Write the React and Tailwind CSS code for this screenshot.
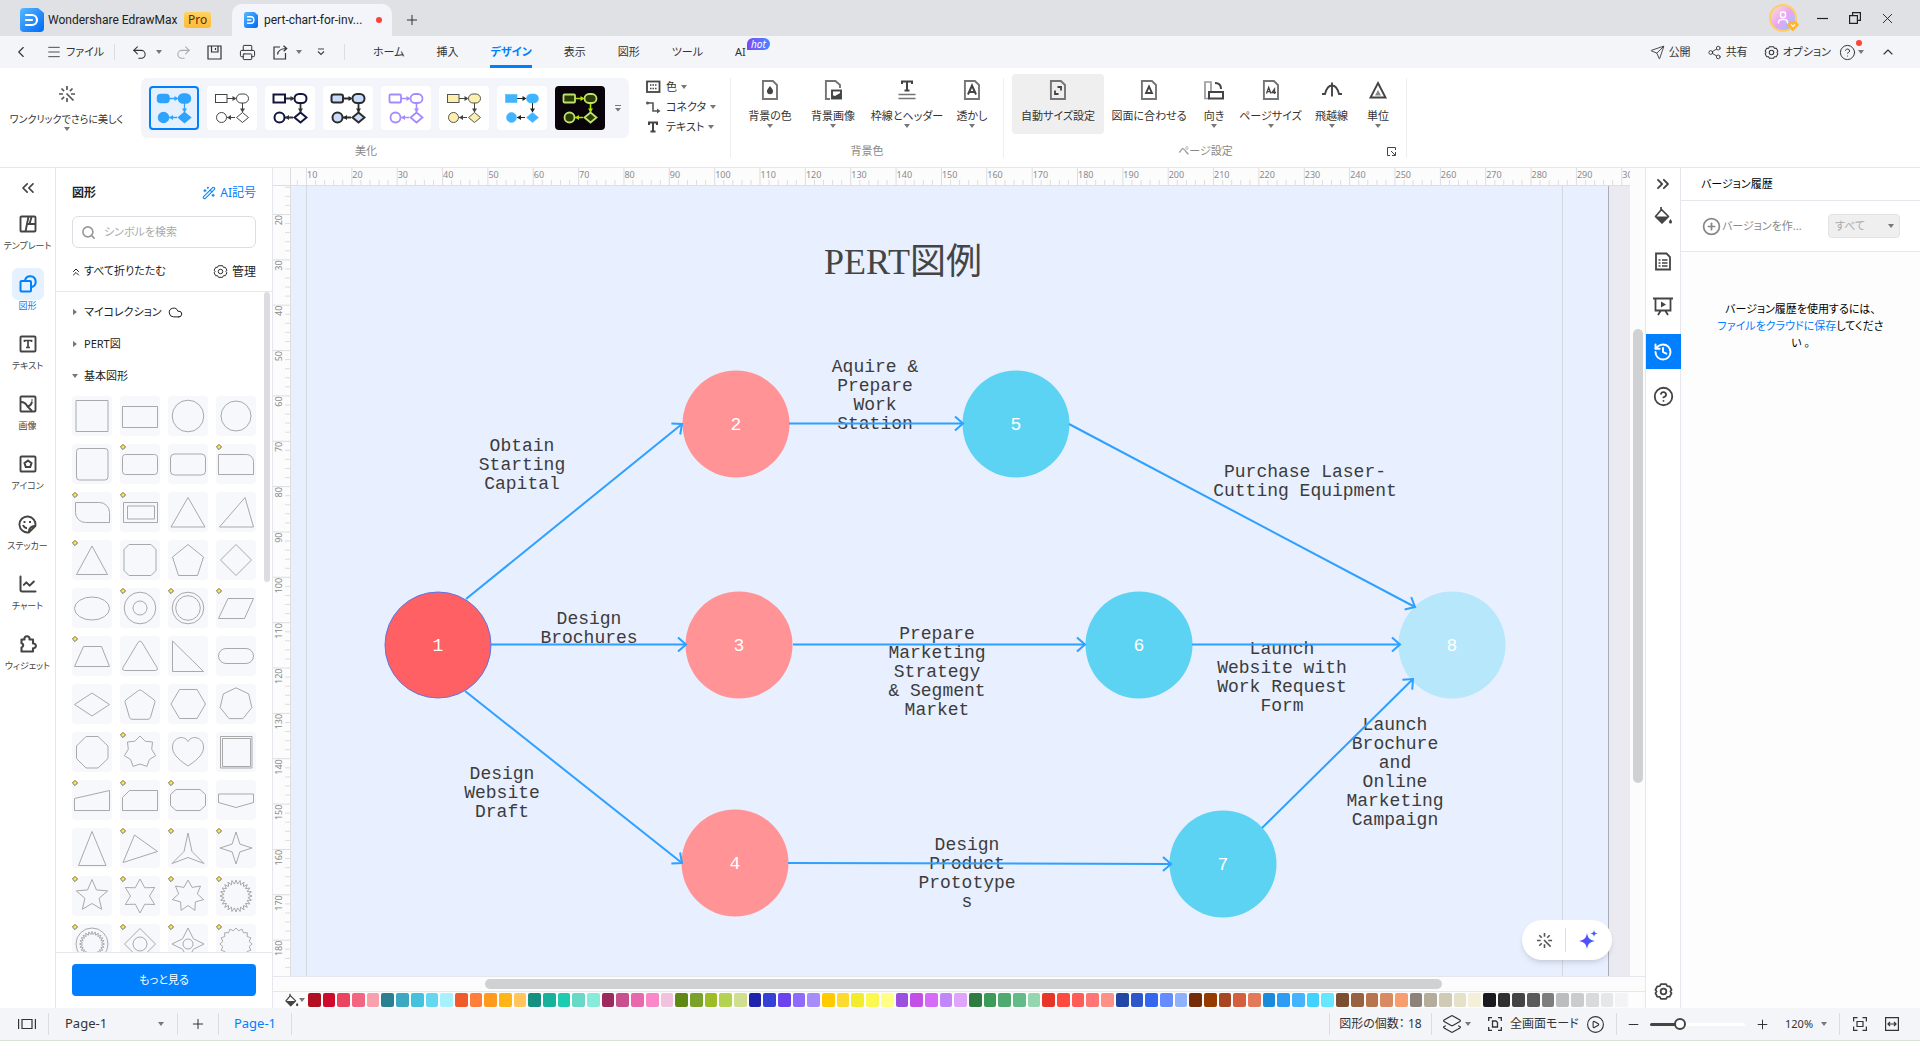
import React, { useState } from 'react';
import clsx from 'clsx';
import {
  ChevronLeft, Menu, Undo2, Redo2, Printer, Plus, Minus, X,
  Send, Share2, CircleHelp, ChevronUp, ChevronsLeft, ChevronsRight, ChevronsUp,
  Search, Cloud, WandSparkles, ChartLine, CirclePlus, History, Layers2, CirclePlay,
} from 'lucide-react';

// ---------------------------------------------------------------- helpers

function Caret({ className }) {
  return (
    <svg width="6" height="4" viewBox="0 0 6 4" className={clsx('shrink-0 fill-[#777]', className)}>
      <path d="M0 0h6L3 4z" />
    </svg>
  );
}

function Sep({ className }) {
  return <div className={clsx('w-px shrink-0 bg-[#dcdde2]', className)} />;
}

function Gear({ size = 16, strokeWidth = 1.2 }) {
  return (
    <svg width={size} height={size} viewBox="0 0 16 16" fill="none" stroke="currentColor" strokeWidth={strokeWidth} strokeLinejoin="round">
      <path d="M5.8 1.8h4.4l.9 1.7 2.1.1 1.6 3-1 1.4 1 1.4-1.6 3-2.1.1-.9 1.7H5.8l-.9-1.7-2.1-.1-1.6-3 1-1.4-1-1.4 1.6-3 2.1-.1z" />
      <circle cx="8" cy="8" r="2.4" />
    </svg>
  );
}

function BucketIcon({ size = 20 }) {
  return (
    <svg width={size} height={size} viewBox="0 0 20 20">
      <path d="M8 1v4M8.5 3.5 15.5 10.500 9 17 2.500 10.500z" fill="none" stroke="#444" strokeWidth="1.700" strokeLinejoin="round" />
      <path d="M2.500 10.500h13L9 17z" fill="#444" />
      <path d="M17.500 13c1 1.500 1.500 2.200 1.500 3a1.500 1.500 0 0 1-3 0c0-.8.5-1.500 1.500-3z" fill="#444" />
    </svg>
  );
}

function MagicIcon({ size = 18 }) {
  return (
    <svg width={size} height={size} viewBox="0 0 18 18" fill="none" stroke="#555" strokeWidth="1.700">
      <path d="M9 1v4M9 13v4M1 9h4M13 9h4M3.500 3.500l2.600 2.600M14.500 3.500l-2.600 2.600M3.500 14.500l2.600-2.600M8.500 8.500l7 7" />
    </svg>
  );
}

function PageIcon({ children }) {
  return (
    <svg width="20" height="20" viewBox="0 0 20 20">
      <path d="M2.900 1h10L17 5v14H2.900z" fill="none" stroke="#757575" strokeWidth="1.900" />
      {children}
    </svg>
  );
}

// ---------------------------------------------------------------- title bar

function AppLogo({ className }) {
  return (
    <svg viewBox="0 0 24 24" preserveAspectRatio="none" className={className}>
      <defs>
        <linearGradient id="logo" x1="0" y1="0" x2="1" y2="1">
          <stop offset="0" stopColor="#56b8ff" />
          <stop offset="1" stopColor="#0068f5" />
        </linearGradient>
      </defs>
      <path d="M4 0h14l6 5v15a4 4 0 0 1-4 4H4a4 4 0 0 1-4-4V4a4 4 0 0 1 4-4z" fill="url(#logo)" />
      <path d="M6 7h6a5 5 0 0 1 0 10H6M6 12h6" fill="none" stroke="#fff" strokeWidth="2.200" strokeLinecap="round" />
    </svg>
  );
}

function TitleBar() {
  return (
    <header className="flex h-9 shrink-0 items-stretch bg-[#e0e1e5] pl-5 text-[#222]">
      <div className="flex w-[212px] items-center pt-[3px]">
        <AppLogo className="h-6 w-6 shrink-0" />
        <span className="ml-1 w-[132px] shrink-0 font-['Roboto',sans-serif] text-xs whitespace-nowrap">Wondershare EdrawMax</span>
        <span className="ml-1 rounded-[3px] bg-gradient-to-b from-[#ffd35f] to-[#ffb936] px-1 text-xs leading-4 text-[#5b2c00]">Pro</span>
      </div>
      <div className="mt-1 flex w-40 items-center rounded-t-[10px] bg-[#f3f5fa] pl-3">
        <AppLogo className="h-4 w-[14px] shrink-0" />
        <span className="ml-[6px] w-[104px] font-['Roboto',sans-serif] text-xs whitespace-nowrap">pert-chart-for-inv...</span>
        <span className="ml-2 h-[6px] w-[6px] rounded-full bg-[#ff4236]" />
      </div>
      <button aria-label="新しいタブ" className="px-3 pt-[3px]"><Plus size={16} strokeWidth={1.4} /></button>
      <div className="ml-auto flex items-center pr-6">
        <div className="relative mr-[18px] h-7 w-7 rounded-full border-2 border-[#ffcf66] bg-gradient-to-br from-[#ffe0c8] via-[#e9a4f5] to-[#7cc4ff]">
          <svg viewBox="0 0 24 24" className="h-6 w-6" fill="none" stroke="#fff" strokeWidth="1.500">
            <rect x="9.500" y="6" width="5" height="5.500" rx="2" />
            <path d="M7.500 17.500v-1.500a3 3 0 0 1 3-2.500h3a3 3 0 0 1 3 2.500v1.500" />
          </svg>
          <svg viewBox="0 0 12 12" className="absolute -right-1 -bottom-0.5 h-3 w-3">
            <path d="M3 1h6l3 4-6 6.500L0 5z" fill="#ffb52e" />
            <path d="M4 4.500l2 2 2-2" fill="none" stroke="#fff" strokeWidth="1.200" />
          </svg>
        </div>
        <button aria-label="最小化" className="mr-5">
          <svg width="14" height="14" viewBox="0 0 14 14" stroke="#222" strokeWidth="1.200"><path d="M2 7.500h11" /></svg>
        </button>
        <button aria-label="元に戻す" className="mr-[18px]">
          <svg width="12" height="12" viewBox="0 0 12 12" fill="none" stroke="#222" strokeWidth="1.200">
            <path d="M.6 3.600h7.800v7.800H.6zM3.600 3.600V.6h7.800v7.800h-3" />
          </svg>
        </button>
        <button aria-label="閉じる"><X size={17} strokeWidth={1.3} /></button>
      </div>
    </header>
  );
}

// ---------------------------------------------------------------- menu bar

const MENUS = ['ホーム', '挿入', 'デザイン', '表示', '図形', 'ツール', 'AI'];

function MenuBar() {
  const [active, setActive] = useState('デザイン');
  return (
    <nav className="flex h-8 shrink-0 items-center bg-[#f3f5f9] pr-6 pl-3 text-[11px] text-[#333]">
      <button aria-label="戻る" className="mr-4"><ChevronLeft size={18} strokeWidth={1.5} /></button>
      <button className="flex w-[60px] items-center gap-1 text-[11px] whitespace-nowrap"><Menu size={16} strokeWidth={1.3} className="shrink-0" />ファイル</button>
      <Sep className="mr-4 ml-2 h-4" />
      <button aria-label="元に戻す" className="flex w-[44px] items-center gap-2"><Undo2 size={17} strokeWidth={1.5} /><Caret /></button>
      <button aria-label="やり直し" className="w-8 text-[#aaa]"><Redo2 size={17} strokeWidth={1.5} /></button>
      <button aria-label="保存" className="w-8">
        <svg width="15" height="15" viewBox="0 0 15 15" fill="none" stroke="#333" strokeWidth="1.200"><path d="M1 1h13v13H1zM4.500 1v6h6.500V1M8.500 3v2" /></svg>
      </button>
      <button aria-label="印刷" className="w-[34px]"><Printer size={17} strokeWidth={1.4} /></button>
      <button aria-label="エクスポート" className="flex w-11 items-center gap-2">
        <svg width="15" height="15" viewBox="0 0 15 15" fill="none" stroke="#333" strokeWidth="1.200"><path d="M7 2H1v12h11.500V8M4.500 9.500C5 6 8 3.500 13.500 3.500M10.500.8l3.200 2.700-3 2.700" /></svg>
        <Caret />
      </button>
      <button aria-label="その他" className="w-[27px]">
        <svg width="8" height="8" viewBox="0 0 8 8" fill="none" stroke="#444" strokeWidth="1.200"><path d="M1 1h6M1 3.500l3 3 3-3" /></svg>
      </button>
      <Sep className="h-4" />
      <div className="flex h-full gap-8 pl-7">
        {MENUS.map((m) => (
          <button
            key={m}
            onClick={() => setActive(m)}
            className={clsx(
              'relative h-full border-b-[3px] pt-[3px] whitespace-nowrap',
              active === m ? 'border-[#0080ff] font-bold text-[#0080ff]' : 'border-transparent'
            )}
          >
            {m}
            {m === 'AI' && (
              <span className="absolute top-0.5 left-3 rounded-full rounded-bl-none bg-gradient-to-r from-[#7b45f5] to-[#3f86ff] px-1 text-[10px] leading-3 text-white italic">hot</span>
            )}
          </button>
        ))}
      </div>
      <div className="ml-auto flex items-center">
        <button className="mr-4 flex items-center gap-1"><Send size={15} strokeWidth={1.4} />公開</button>
        <button className="mr-4 flex items-center gap-1"><Share2 size={15} strokeWidth={1.4} />共有</button>
        <button className="mr-2 flex items-center gap-1"><Gear size={15} strokeWidth={1.1} />オプション</button>
        <button aria-label="ヘルプ" className="relative mr-4 flex items-center gap-0.5">
          <CircleHelp size={17} strokeWidth={1.4} /><Caret />
          <span className="absolute -top-1 right-0.5 h-[6px] w-[6px] rounded-full bg-[#ff4236]" />
        </button>
        <button aria-label="リボンを折りたたむ"><ChevronUp size={16} strokeWidth={1.7} /></button>
      </div>
    </nav>
  );
}

// ---------------------------------------------------------------- ribbon

const THEMES = [
  { line: '#2ea3ff', fill: '#2ea3ff', arrow: '#2ea3ff', w: 1.5, rx: 3, tile: 'bg-[#e5f0ff] border-2 border-[#0080ff]' },
  { line: '#444', fill: 'none', arrow: '#444', w: 1, rx: 0, tile: 'bg-white' },
  { line: '#12163f', fill: 'none', arrow: '#333', w: 2, rx: 0, tile: 'bg-white' },
  { line: '#2b2b2b', fill: '#c9dcfb', arrow: '#2b2b2b', w: 2, rx: 2, tile: 'bg-white' },
  { line: '#a58bff', fill: 'none', arrow: '#a58bff', w: 1.8, rx: 1, tile: 'bg-white' },
  { line: '#555', fill: '#fbf0ad', arrow: '#444', w: 1, rx: 0, tile: 'bg-white' },
  { line: '#3fb4ff', fill: '#3fb4ff', arrow: '#222', w: 0.5, rx: 0, tile: 'bg-white' },
  { line: '#bfe36c', fill: '#2a3d06', arrow: '#b5e300', w: 1.8, rx: 1, tile: 'bg-[#08040a]' },
];

function ThemeThumb({ theme }) {
  const { line, fill, arrow, w, rx } = theme;
  return (
    <svg width="36" height="32" viewBox="0 0 36 32">
      <g stroke={arrow} strokeWidth={Math.max(1, w - 0.2)} fill="none">
        <path d="M13 6.500h8M28.500 11v9M21 25.500h-8" />
      </g>
      <g fill={arrow}>
        <path d="M18.500 4l4 2.500-4 2.500zM26 16.500l2.500 4 2.500-4zM17 23l-4 2.500 4 2.500z" />
      </g>
      <g stroke={line} strokeWidth={w} fill={fill}>
        <rect x="1.500" y="2.500" width="11.500" height="8" rx={rx} />
        <rect x="22.500" y="2" width="12" height="9" rx="4.500" />
        <circle cx="7.500" cy="25.500" r="5" />
        <path d="M28.500 20.500l6 5-6 5-6-5z" />
      </g>
    </svg>
  );
}

const BACKGROUND_TOOLS = [
  { label: '背景の色', width: 'w-[62px]', icon: <PageIcon><path d="M10 6c2.400 3 3 4 3 5.200a3 3 0 0 1-6 0C7 10 7.600 9 10 6z" fill="#444" /></PageIcon> },
  {
    label: '背景画像',
    width: 'w-16',
    icon: (
      <svg width="20" height="20" viewBox="0 0 20 20" fill="none">
        <path d="M7 19H2.900V1h9.500L17 5v3" stroke="#757575" strokeWidth="1.900" />
        <rect x="9" y="10.500" width="9" height="8" stroke="#444" strokeWidth="1.900" />
        <path d="M9 15l3 1 6-3.500V18.500H9z" fill="#444" />
      </svg>
    ),
  },
  {
    label: '枠線とヘッダー',
    width: 'w-[84px]',
    icon: (
      <svg width="20" height="20" viewBox="0 0 20 20" fill="none">
        <path d="M5 4V1.500h10V4M10 1.500V10M7.500 10.500h5" stroke="#444" strokeWidth="2" />
        <path d="M1.500 14.500h17M1.500 18.500h17" stroke="#757575" strokeWidth="1.700" />
      </svg>
    ),
  },
  { label: '透かし', width: 'w-[46px]', icon: <PageIcon><path d="M6 14.500l4-9 4 9M7.500 12h5" fill="none" stroke="#444" strokeWidth="2" /></PageIcon> },
];

const PAGE_TOOLS = [
  { label: '自動サイズ設定', width: 'w-[92px]', active: true, noCaret: true, icon: <PageIcon><path d="M9.500 7H13v3.500M10.500 14H7v-3.500" fill="none" stroke="#444" strokeWidth="1.800" /></PageIcon> },
  { label: '図面に合わせる', width: 'w-[90px]', noCaret: true, icon: <PageIcon><path d="M10 6.500l3 6.500H7z" fill="none" stroke="#444" strokeWidth="1.800" /></PageIcon> },
  {
    label: '向き',
    width: 'w-10',
    icon: (
      <svg width="20" height="20" viewBox="0 0 20 20" fill="none">
        <path d="M5 18.500H1V2h6v10" stroke="#999" strokeWidth="1.700" />
        <rect x="5" y="12" width="14" height="6.500" stroke="#444" strokeWidth="2" />
        <path d="M11 3c3.500 0 6 2 6 6" stroke="#444" strokeWidth="2" />
      </svg>
    ),
  },
  { label: 'ページサイズ', width: 'w-[73px]', icon: <PageIcon><path d="M5.500 13.500l2.200-6 2.200 6M6.200 11.700h3M13.500 14V9l-2.500 3.500h4" fill="none" stroke="#444" strokeWidth="1.300" /></PageIcon> },
  {
    label: '飛越線',
    width: 'w-[49px]',
    icon: <svg width="20" height="20" viewBox="0 0 20 20" fill="none" stroke="#444" strokeWidth="1.900"><path d="M0 14h3c1.500-6 4-8.500 7-8.500s5.500 2.500 7 8.500h3M10 2.500v14" /></svg>,
  },
  {
    label: '単位',
    width: 'w-11',
    icon: (
      <svg width="20" height="20" viewBox="0 0 20 20">
        <path d="M10 3l7.500 14.500h-15z" fill="none" stroke="#444" strokeWidth="1.900" />
        <path d="M10 10l3 5.500H7z" fill="#888" />
      </svg>
    ),
  },
];

function RibbonButton({ tool }) {
  return (
    <button className={clsx('flex h-[60px] shrink-0 flex-col items-center rounded pt-[6px] text-[#333]', tool.width, tool.active && 'bg-[#efefef]')}>
      {tool.icon}
      <span className="mt-2 text-[11px] leading-4 whitespace-nowrap">{tool.label}</span>
      {!tool.noCaret && <Caret />}
    </button>
  );
}

function Ribbon() {
  return (
    <section className="flex h-[100px] shrink-0 border-b border-[#e6e7ec] bg-white text-[11px]">
      <div className="flex w-[646px] shrink-0 flex-col">
        <div className="flex h-[76px] items-center pt-[4px]">
          <button className="flex w-[133px] flex-col items-center text-[#333]">
            <MagicIcon />
            <span className="mt-2 text-[10px] leading-4 whitespace-nowrap">ワンクリックでさらに美しく</span>
            <Caret />
          </button>
          <div className="ml-2 flex h-[60px] w-[488px] items-center rounded-md bg-[#f3f5fa] pl-2">
            <div className="flex gap-2">
              {THEMES.map((t, i) => (
                <button key={i} aria-label={`テーマ ${i + 1}`} className={clsx('flex h-11 w-[50px] items-center justify-center rounded', t.tile)}>
                  <ThemeThumb theme={t} />
                </button>
              ))}
            </div>
            <button aria-label="テーマをさらに表示" className="ml-2.5">
              <svg width="6" height="7" viewBox="0 0 6 7" fill="#777"><path d="M0 0h6v1H0zM0 3h6L3 6.500z" /></svg>
            </button>
          </div>
        </div>
        <span className="pr-3 pl-[98px] text-center leading-[14px] text-[#888]">美化</span>
      </div>
      <div className="flex w-[84px] shrink-0 flex-col pt-[9px] text-[#333]">
        <button className="flex h-5 items-center gap-1">
          <svg width="16" height="14" viewBox="0 0 16 14"><rect x="1" y="1.500" width="12.500" height="10.500" fill="none" stroke="#444" strokeWidth="1.800" /><path d="M4 5h7M4 8.500h7" stroke="#444" strokeWidth="1.500" strokeDasharray="1.500 1" /></svg>
          色<Caret />
        </button>
        <button className="flex h-5 items-center gap-1">
          <svg width="16" height="14" viewBox="0 0 16 14" fill="none" stroke="#555" strokeWidth="1.600"><path d="M2 3h5v8h5" /><circle cx="1.500" cy="3" r="1.500" fill="#555" stroke="none" /><path d="M11 8.500l3.500 2.500-3.500 2.500z" fill="#555" stroke="none" /></svg>
          コネクタ<Caret />
        </button>
        <button className="flex h-5 items-center gap-1">
          <svg width="16" height="14" viewBox="0 0 16 14" fill="none" stroke="#444" strokeWidth="2"><path d="M3 5V2.500h8V5M7 2.500V11M4.500 11.500h5" /></svg>
          テキスト<Caret />
        </button>
      </div>
      <Sep className="mt-[10px] h-20 bg-[#eeeeee]" />
      <div className="flex shrink-0 flex-col px-2 pt-[6px]">
        <div className="flex">{BACKGROUND_TOOLS.map((t) => <RibbonButton key={t.label} tool={t} />)}</div>
        <span className="mt-[9px] text-center leading-4 text-[#888]">背景色</span>
      </div>
      <Sep className="mt-[10px] h-20 bg-[#eeeeee]" />
      <div className="flex shrink-0 flex-col pt-[6px] pr-[6px] pl-2">
        <div className="flex">{PAGE_TOOLS.map((t) => <RibbonButton key={t.label} tool={t} />)}</div>
        <div className="mt-[9px] flex items-center pr-1 text-[#888]">
          <span className="flex-1 pl-3 text-center leading-4">ページ設定</span>
          <button aria-label="詳細設定">
            <svg width="9" height="9" viewBox="0 0 9 9" fill="none" stroke="#444"><path d="M3 8.500H.5v-8h8V3M4 4l4 4M8.500 5v3.500H5" /></svg>
          </button>
        </div>
      </div>
      <Sep className="mt-[10px] h-20 bg-[#eeeeee]" />
    </section>
  );
}

// ---------------------------------------------------------------- left rail

function RailSquare({ children }) {
  return (
    <svg width="18" height="18" viewBox="0 0 18 18" fill="none" stroke="currentColor" strokeWidth="1.900">
      <rect x="1.500" y="1.500" width="15" height="15" rx="1" />
      {children}
    </svg>
  );
}

const RAIL = [
  { label: 'テンプレート', icon: <RailSquare><path d="M9.500 1.500l-3 15M8.500 9h8M12.500 2l-2 7" /></RailSquare> },
  {
    label: '図形',
    icon: (
      <svg width="18" height="18" viewBox="0 0 18 18" fill="none" stroke="currentColor" strokeWidth="2">
        <rect x="1.500" y="6" width="10.500" height="10.500" rx="1" />
        <path d="M6 5.500A5.400 5.400 0 1 1 12.500 12" />
      </svg>
    ),
  },
  { label: 'テキスト', icon: <RailSquare><path d="M5.500 7V5.500h7V7M9 5.500V12M7 12.500h4" strokeWidth="1.700" /></RailSquare> },
  { label: '画像', icon: <RailSquare><path d="M2 7c3 0 5 1.500 6.500 4.500 2-.5 4-1.500 4.500-5M8.500 11.500l4.500 4.500M13 4.500v1" /></RailSquare> },
  { label: 'アイコン', icon: <RailSquare><path d="M9 5.500l3.500 2.600-1.300 4H6.800l-1.300-4z" strokeWidth="2" /></RailSquare> },
  {
    label: 'ステッカー',
    icon: (
      <svg width="19" height="19" viewBox="0 0 19 19" fill="none" stroke="currentColor" strokeWidth="1.900">
        <path d="M11 17.300A8 8 0 1 1 17.300 11c-3.500-.5-6.800 2.500-6.300 6.300zM17.300 11L11 17.300" />
        <path d="M5 10c.8 2 2 3 4 3.200" />
        <path d="M6.500 6v2M12 6v2" />
      </svg>
    ),
  },
  { label: 'チャート', icon: <ChartLine size={20} strokeWidth={2.4} /> },
  {
    label: 'ウィジェット',
    icon: (
      <svg width="18" height="18" viewBox="0 0 18 18" fill="none" stroke="currentColor" strokeWidth="2.100" strokeLinejoin="round">
        <path d="M2.500 4.500h3a2.600 2.600 0 1 1 5 0h3.500v4a2.400 2.400 0 1 1 0 4.700v3.300H2.500v-4a2.200 2.200 0 0 0 0-4.300z" />
      </svg>
    ),
  },
];

function LeftRail() {
  return (
    <aside className="flex w-14 shrink-0 flex-col items-center border-r border-[#e6e7ec] bg-white pt-[10px] text-[#444]">
      <button aria-label="パネルを閉じる"><ChevronsLeft size={20} strokeWidth={2} /></button>
      <div className="mt-[10px] flex flex-col gap-3">
        {RAIL.map((r) => (
          <button key={r.label} className={clsx('flex h-12 w-14 flex-col items-center', r.label === '図形' && 'text-[#0080ff]')}>
            <span className={clsx('flex h-8 w-8 items-center justify-center rounded-md', r.label === '図形' && 'bg-[#e5f1ff]')}>{r.icon}</span>
            <span className="text-[9px] leading-3 whitespace-nowrap">{r.label}</span>
          </button>
        ))}
      </div>
    </aside>
  );
}

// ---------------------------------------------------------------- shapes panel

// points of a regular polygon (or a star, when inner is given)
function poly(n, r, inner, cx = 20, cy = 20) {
  const count = inner ? n * 2 : n;
  const pts = [];
  for (let i = 0; i < count; i++) {
    const a = (Math.PI * 2 * i) / count - Math.PI / 2;
    const rad = inner && i % 2 ? inner : r;
    pts.push(`${(cx + rad * Math.cos(a)).toFixed(1)},${(cy + rad * Math.sin(a)).toFixed(1)}`);
  }
  return <polygon points={pts.join(' ')} />;
}

const circle = (r) => <circle cx="20" cy="20" r={r} />;
const path = (d) => <path d={d} />;

const SHAPES = [
  { name: '正方形', el: path('M4 4.500h32v31H4z') },
  { name: '長方形', el: path('M2.500 10.500h35v21h-35z') },
  { name: '円', el: circle(15.8) },
  { name: '真円', el: circle(15) },
  { name: '角丸正方形', el: <rect x="4.500" y="4.500" width="31.500" height="31.500" rx="3" /> },
  { name: '角丸長方形', dot: true, el: <rect x="2.500" y="10.500" width="35" height="20" rx="3" /> },
  { name: '角丸長方形 2', el: <rect x="2.500" y="10" width="35" height="21" rx="4" /> },
  { name: '片角丸', dot: true, el: path('M2.500 10.500h28a7 7 0 0 1 7 7v13h-35z') },
  { name: '対角丸', dot: true, el: path('M3.500 10.500h24a10 10 0 0 1 10 10v10h-24a10 10 0 0 1-10-10z') },
  { name: 'フレーム', dot: true, el: path('M3.500 10.500h34v20h-34zM7.500 14h27v13h-27z') },
  { name: '三角形', el: path('M20 5.500l17 29.500H3z') },
  { name: '鋭角三角形', el: path('M29 5.500L37.500 35h-34z') },
  { name: '正三角形', dot: true, el: path('M20 6l15.500 28.500h-31z') },
  { name: '角切り正方形', el: path('M9 4.500h22l5 5v21l-5 5H9l-5-5v-21z') },
  { name: '五角形', el: path('M20 4.500l15.500 12.500-6 18.500h-19L4.500 17z') },
  { name: 'ひし形', el: path('M20 4.500L35.500 20 20 35.500 4.500 20z') },
  { name: '楕円', el: <ellipse cx="20" cy="20.500" rx="17.500" ry="11.500" /> },
  { name: 'ドーナツ', dot: true, el: <>{circle(15.8)}{circle(7)}</> },
  { name: 'リング', dot: true, el: <>{circle(15.8)}{circle(12.300)}</> },
  { name: '平行四辺形', dot: true, el: path('M12 10.500h25.500l-9 20H2.500z') },
  { name: '台形', dot: true, el: path('M11.500 10.500h18l8 20h-35z') },
  { name: '角丸三角形', el: path('M18.200 6.200q1.800-2.400 3.600 0l15.400 25.600q1 2.500-1.700 2.700h-31q-2.700-.2-1.700-2.700z') },
  { name: '直角三角形', el: path('M4.500 5v30.500h31z') },
  { name: 'カプセル', el: <rect x="2.500" y="12.500" width="35" height="15" rx="7.500" /> },
  { name: 'ダイヤ', el: path('M20 9l17.500 11.500L20 32 2.500 20.500z') },
  { name: '角丸五角形', el: path('M18.500 6.500q1.500-1 3 0L34 15.800q1.300 1 .9 2.500l-4.400 15q-.6 2-2.500 2H12q-1.900 0-2.500-2l-4.400-15q-.4-1.500.9-2.500z') },
  { name: '六角形', el: path('M11.500 5.500h17.500l8.500 14.500-8.500 14.500H11.500L3 20z') },
  { name: '七角形', el: poly(7, 16.200) },
  { name: '八角形', el: path('M14 4.500h12l10 9.500v12.500l-10 9.500H14L4.500 26.500V14z') },
  { name: '七角星', dot: true, el: poly(7, 16, 12) },
  { name: 'ハート', el: path('M20 34C8 26 4.500 21 4.500 15c0-9 11-13 15.500-5.500C24.500 2 35.500 6 35.500 15c0 6-3.500 11-15.500 19z') },
  { name: '二重正方形', el: path('M4.500 4.500h31.500v31.500h-31.500zM6.500 6.500h28v28h-28z') },
  { name: '手動入力', dot: true, el: path('M2.500 18.500l35-8v20h-35z') },
  { name: 'カード', dot: true, el: path('M9.500 10.500h28v20h-35v-13z') },
  { name: '角切り長方形', dot: true, el: path('M8 9.500h24l5.500 5v11l-5.500 5H8l-5.500-5v-11z') },
  { name: 'ページ外結合', el: path('M2.500 14h35v8.500L20 27.500 2.500 22.500z') },
  { name: '二等辺三角形', el: path('M20 3.500l14 34H6.500z') },
  { name: '回転三角形', dot: true, el: path('M14.500 7l23 16.500L3 34.500z') },
  { name: '三角星', dot: true, el: path('M20 5l4 18.500 12 12-16-6-16 6 12-12z') },
  { name: '四角星', dot: true, el: poly(4, 16, 5.500) },
  { name: '五角星', dot: true, el: poly(5, 16.500, 7.500) },
  { name: '六角星', dot: true, el: poly(6, 17, 9.500) },
  { name: '七角星 2', dot: true, el: poly(7, 16, 9.500) },
  { name: 'バースト', dot: true, el: poly(24, 16, 12) },
  { name: 'シール', dot: true, el: <>{circle(16)}{poly(24, 12.500, 9.500)}</> },
  { name: 'ひし形と円', dot: true, el: <>{path('M20 4.500L35.500 20 20 35.500 4.500 20z')}{circle(7)}</> },
  { name: '星と円', dot: true, el: <>{poly(4, 16, 7.500)}{circle(5)}</> },
  { name: '歯車', dot: true, el: poly(16, 16, 13.500) },
];

function ShapesPanel() {
  return (
    <aside className="flex w-[217px] shrink-0 flex-col border-r border-[#e6e7ec] bg-white text-xs text-[#222]">
      <div className="flex h-12 items-center justify-between px-4 pt-px">
        <h2 className="font-bold">図形</h2>
        <button className="flex items-center gap-1 text-[#0080ff]"><WandSparkles size={14} strokeWidth={1.8} />AI記号</button>
      </div>
      <label className="mx-4 flex h-8 items-center gap-2 rounded-md border border-[#dddee3] px-2 text-[#999]">
        <Search size={15} strokeWidth={2.6} />
        <input placeholder="シンボルを検索" aria-label="シンボルを検索" className="min-w-0 flex-1 pt-px text-[11px] outline-none placeholder:text-[#aaa]" />
      </label>
      <div className="flex h-11 items-center justify-between border-b border-[#e6e7ec] px-4 pt-1">
        <button className="flex items-center gap-0.5 text-[11px]"><ChevronsUp size={12} strokeWidth={2} className="-ml-0.5" />すべて折りたたむ</button>
        <button className="flex items-center gap-1"><Gear size={15} strokeWidth={1} />管理</button>
      </div>
      <div className="flex min-h-0 flex-1 overflow-hidden">
        <div className="flex-1 pl-4 text-[11px]">
          <button className="flex h-8 w-full items-center gap-[6px] pt-2">
            <Caret className="-rotate-90" />マイコレクション<Cloud size={15} strokeWidth={1.6} />
          </button>
          <button className="flex h-8 w-full items-center gap-[6px] pt-2"><Caret className="-rotate-90" />PERT図</button>
          <button className="flex h-8 w-full items-center gap-[6px] pt-2"><Caret />基本図形</button>
          <div className="mt-2 flex w-48 flex-wrap gap-2">
            {SHAPES.map((s) => (
              <button key={s.name} title={s.name} className="relative h-10 w-10 rounded bg-[#f7f8fc]">
                <svg viewBox="0 0 40 40" fill="none" stroke="#a9a9a9" className="h-10 w-10">{s.el}</svg>
                {s.dot && (
                  <svg width="6" height="6" viewBox="0 0 6 6" className="absolute top-0 left-0"><path d="M3 .4L5.600 3 3 5.600.4 3z" fill="#ffe14d" stroke="#555" strokeWidth=".8" /></svg>
                )}
              </button>
            ))}
          </div>
        </div>
        <div className="mr-0.5 h-[290px] w-[6px] shrink-0 rounded-full bg-[#dcdce2]" />
      </div>
      <div className="border-t border-[#e6e7ec] px-4 pt-[11px] pb-3">
        <button className="h-8 w-full rounded bg-[#0080ff] text-[11px] text-white">もっと見る</button>
      </div>
    </aside>
  );
}

// ---------------------------------------------------------------- drawing area

const MM10 = 45.354; // 10mm at 120%
const range = (n) => Array.from({ length: n }, (_, i) => i);

function RulerTop() {
  return (
    <svg className="h-full w-full" fill="#8a8a8a" stroke="none" fontSize="9">
      {range(150).map((i) => {
        const x = 15.5 + (i - 1) * (MM10 / 5);
        const major = i % 5 === 1;
        return <path key={i} d={`M${x.toFixed(1)} ${major ? 0 : 12}V17`} stroke="#dddde2" />;
      })}
      {range(30).map((i) => (
        <text key={i} x={16 + i * MM10} y="10">{(i + 1) * 10}</text>
      ))}
    </svg>
  );
}

function RulerLeft() {
  return (
    <svg className="h-full w-full" fill="#8a8a8a" fontSize="9">
      {range(90).map((i) => {
        const y = 0.5 + 28 + (i - 3) * (MM10 / 5);
        const major = i % 5 === 3;
        return <path key={i} d={`M${major ? 0 : 12} ${y.toFixed(1)}H18`} stroke="#dddde2" />;
      })}
      {range(17).map((i) => (
        <text key={i} textAnchor="end" transform={`translate(9 ${29 + i * MM10}) rotate(-90)`}>{20 + i * 10}</text>
      ))}
    </svg>
  );
}

const NODES = [
  { id: 1, x: 147, y: 459, color: 'bg-[#ff6064] border border-[#5a76e8]' },
  { id: 2, x: 445, y: 238, color: 'bg-[#ff9396]' },
  { id: 3, x: 448, y: 459, color: 'bg-[#ff9396]' },
  { id: 4, x: 444, y: 677, color: 'bg-[#ff9396]' },
  { id: 5, x: 725, y: 238, color: 'bg-[#5cd3f3]' },
  { id: 6, x: 848, y: 459, color: 'bg-[#5cd3f3]' },
  { id: 7, x: 932, y: 678, color: 'bg-[#5cd3f3]' },
  { id: 8, x: 1161, y: 459, color: 'bg-[#b6e7fa]' },
];

const LINKS = [
  [175, 413, 391, 238],
  [200, 458.5, 395, 458.5],
  [174, 505, 391, 677],
  [498, 237.5, 672, 237.5],
  [778, 238, 1124, 421],
  [502, 458.5, 794, 458.5],
  [901, 458.5, 1109, 458.5],
  [497, 677, 880, 678],
  [971, 642, 1122, 493],
];

const LABELS = [
  { x: 231, y: 279, lines: ['Obtain', 'Starting', 'Capital'] },
  { x: 584, y: 210, lines: ['Aquire &', 'Prepare', 'Work', 'Station'] },
  { x: 298, y: 443, lines: ['Design', 'Brochures'] },
  { x: 1014, y: 296, lines: ['Purchase Laser-', 'Cutting Equipment'] },
  { x: 646, y: 486, lines: ['Prepare', 'Marketing', 'Strategy', '& Segment', 'Market'] },
  { x: 991, y: 492, lines: ['Launch', 'Website with', 'Work Request', 'Form'] },
  { x: 1104, y: 587, lines: ['Launch', 'Brochure', 'and', 'Online', 'Marketing', 'Campaign'] },
  { x: 211, y: 607, lines: ['Design', 'Website', 'Draft'] },
  { x: 676, y: 688, lines: ['Design', 'Product', 'Prototype', 's'] },
];

function Canvas() {
  return (
    <div className="relative min-w-0 flex-1 overflow-hidden bg-[#eaeaf0]">
      <div className="absolute top-0 left-0 h-full w-[1318px] border-r border-[#a9adb8] bg-[#e8efff]">
        <div className="absolute top-0 left-[15px] h-full w-[1257px] border-x border-[#d3d9e0]" />
        <h1 className="absolute top-[76px] left-[446px] w-[332px] -translate-y-1/2 text-center font-['Liberation_Serif','Noto_Sans_CJK_JP',serif] text-4xl font-normal text-[#444]">PERT図例</h1>
        {LABELS.map((l) => (
          <p
            key={l.lines.join(' ')}
            className="absolute -translate-x-1/2 -translate-y-1/2 text-center font-['Liberation_Mono',monospace] text-lg leading-[19px] whitespace-pre text-[#3c3c3c]"
            style={{ left: l.x, top: l.y }}
          >
            {l.lines.join('\n')}
          </p>
        ))}
        {NODES.map((n) => (
          <div
            key={n.id}
            className={clsx("absolute flex h-[107px] w-[107px] -translate-x-1/2 -translate-y-1/2 items-center justify-center rounded-full font-['Liberation_Mono',monospace] text-lg text-white", n.color)}
            style={{ left: n.x, top: n.y }}
          >
            {n.id}
          </div>
        ))}
        <svg className="absolute inset-0 h-full w-full" fill="none" stroke="#2ea0ff" strokeWidth="2">
          <defs>
            <marker id="arrow" markerUnits="userSpaceOnUse" markerWidth="12" markerHeight="18" refX="9" refY="9" orient="auto">
              <path d="M1 2l8 7-8 7" fill="none" stroke="#2ea0ff" strokeWidth="2" />
            </marker>
          </defs>
          {LINKS.map(([x1, y1, x2, y2]) => (
            <line key={`${x1}-${y1}`} x1={x1} y1={y1} x2={x2} y2={y2} markerEnd="url(#arrow)" />
          ))}
        </svg>
      </div>
      <div className="absolute right-[18px] bottom-4 flex h-10 items-center rounded-full bg-white px-[14px] shadow-md">
        <button aria-label="ワンクリック美化"><MagicIcon size={17} /></button>
        <Sep className="mx-3 h-6" />
        <button aria-label="AIアシスタント">
          <svg width="20" height="20" viewBox="0 0 20 20">
            <defs><linearGradient id="spark"><stop offset="0" stopColor="#6a3df5" /><stop offset="1" stopColor="#2f6bff" /></linearGradient></defs>
            <path d="M9 3c1 5 2.500 7 8 8-5.500 1-7 3-8 8-1-5-2.500-7-8-8 5.500-1 7-3 8-8zM16 0c.5 2.500 1 3 3.500 3.500C17 4 16.500 4.500 16 7c-.5-2.500-1-3-3.500-3.500C15 3 15.500 2.500 16 0z" fill="url(#spark)" />
          </svg>
        </button>
      </div>
    </div>
  );
}

const SWATCHES = [
  'bg-[#b01020]', 'bg-[#cf0a2c]', 'bg-[#e94560]', 'bg-[#f26681]', 'bg-[#f9a0ae]',
  'bg-[#2a8090]', 'bg-[#3aa9c1]', 'bg-[#43c1de]', 'bg-[#62d9f0]', 'bg-[#a6f1fb]',
  'bg-[#f15a2b]', 'bg-[#ff7f3a]', 'bg-[#ff9a1f]', 'bg-[#ffb515]', 'bg-[#ffc55c]',
  'bg-[#149080]', 'bg-[#17b29b]', 'bg-[#1dcbb0]', 'bg-[#68d9c6]', 'bg-[#86ebdb]',
  'bg-[#9c2a5e]', 'bg-[#c8508e]', 'bg-[#e769ac]', 'bg-[#fb86c8]', 'bg-[#f0c2dd]',
  'bg-[#5f8815]', 'bg-[#7aa22a]', 'bg-[#9cbd26]', 'bg-[#b4d14f]', 'bg-[#cfdf8f]',
  'bg-[#1e24ae]', 'bg-[#3540d6]', 'bg-[#6b41f0]', 'bg-[#8e6bfa]', 'bg-[#a78dfb]',
  'bg-[#ffca00]', 'bg-[#fcdb2e]', 'bg-[#f2ec2d]', 'bg-[#fbf850]', 'bg-[#ffff86]',
  'bg-[#9b4fdf]', 'bg-[#c44fe7]', 'bg-[#d66bfa]', 'bg-[#c286fb]', 'bg-[#dfa4fb]',
  'bg-[#2f7c43]', 'bg-[#3c9b57]', 'bg-[#4faa6f]', 'bg-[#63bb87]', 'bg-[#94d6ad]',
  'bg-[#e8352a]', 'bg-[#ff4a3f]', 'bg-[#ff5c55]', 'bg-[#ff7474]', 'bg-[#ff9088]',
  'bg-[#2246a4]', 'bg-[#2f55cb]', 'bg-[#3566f0]', 'bg-[#668cff]', 'bg-[#8fb1fb]',
  'bg-[#752a08]', 'bg-[#963a00]', 'bg-[#a84522]', 'bg-[#d35f3e]', 'bg-[#e4785a]',
  'bg-[#1a8bdb]', 'bg-[#2e9bf5]', 'bg-[#45b3ff]', 'bg-[#40d3ff]', 'bg-[#66e6ff]',
  'bg-[#7c4f33]', 'bg-[#986242]', 'bg-[#b8744f]', 'bg-[#d98a60]', 'bg-[#f79d6e]',
  'bg-[#8d8279]', 'bg-[#b4ad9b]', 'bg-[#cfcab5]', 'bg-[#e5e1c8]', 'bg-[#f3efd8]',
  'bg-[#1b1b1f]', 'bg-[#2f2f2f]', 'bg-[#444444]', 'bg-[#5b5b5b]', 'bg-[#7e7e7e]',
  'bg-[#bcbdbf]', 'bg-[#cbccce]', 'bg-[#d9dadc]', 'bg-[#e6e7e9]', 'bg-[#f3f3f5]', 'bg-[#fdfdfd]',
];

function Workspace() {
  return (
    <main className="flex min-w-0 flex-1 flex-col bg-[#fcfcfd]">
      <div className="flex min-h-0 flex-1">
        <div className="flex min-w-0 flex-1 flex-col">
          <div className="flex h-[18px] shrink-0 border-b border-[#dddde2]">
            <div className="w-[18px] shrink-0 border-r border-[#dddde2]" />
            <div className="min-w-0 flex-1 overflow-hidden"><RulerTop /></div>
          </div>
          <div className="flex min-h-0 flex-1">
            <div className="w-[18px] shrink-0 overflow-hidden border-r border-[#dddde2]"><RulerLeft /></div>
            <Canvas />
          </div>
        </div>
        <div className="flex w-[15px] shrink-0 flex-col items-center pt-[161px]">
          <div className="h-[454px] w-[10px] rounded-full bg-[#cfd1d2]" />
        </div>
      </div>
      <div className="flex h-[15px] shrink-0 items-center border-t border-[#e6e7ec] pl-[212px]">
        <div className="h-[10px] w-[957px] rounded-full bg-[#cfd1d2]" />
      </div>
      <div className="flex h-[17px] shrink-0 items-center border-t border-[#e6e7ec] pr-[2px] pl-[11px]">
        <button aria-label="塗りつぶし" className="flex w-6 shrink-0 items-center"><BucketIcon size={15} /><Caret /></button>
        <div className="flex flex-1 gap-[2px]">
          {SWATCHES.map((c) => <button key={c} aria-label={c} className={clsx('h-[14px] flex-1 rounded-[2px]', c)} />)}
        </div>
      </div>
    </main>
  );
}

// ---------------------------------------------------------------- right side

function RightRail() {
  return (
    <aside className="flex w-9 shrink-0 flex-col items-center border-x border-[#e6e7ec] bg-white pt-[6px] pb-[7px] text-[#444]">
      <button aria-label="パネルを閉じる"><ChevronsRight size={20} strokeWidth={2.2} /></button>
      <button aria-label="塗り" className="mt-3"><BucketIcon size={20} /></button>
      <button aria-label="ページ" className="mt-[26px]">
        <svg width="18" height="19" viewBox="0 0 18 19" fill="none" stroke="#444" strokeWidth="1.800">
          <path d="M2 1.500h10.500l3.500 3.500v12.500H2z" />
          <path d="M4.500 8h2M8 8h5.500M4.500 11h2M8 11h5.500M4.500 14h2M8 14h5.500" strokeWidth="1.400" />
        </svg>
      </button>
      <button aria-label="プレゼンテーション" className="mt-[26px]">
        <svg width="20" height="19" viewBox="0 0 20 19" fill="none" stroke="#444" strokeWidth="1.800">
          <path d="M0 1.500h20M2.500 1.500v12h15v-12M7.500 14L5 18M12.500 14l2.500 4" />
          <path d="M8 4.500l5 3-5 3z" fill="#444" stroke="none" />
        </svg>
      </button>
      <button aria-label="バージョン履歴" className="mt-[18px] flex h-[35px] w-[35px] items-center justify-center bg-[#0080ff] text-white"><History size={20} strokeWidth={2.3} /></button>
      <button aria-label="ヘルプ" className="mt-[17px]"><CircleHelp size={21} strokeWidth={2.1} /></button>
      <button aria-label="設定" className="mt-auto"><Gear size={19} strokeWidth={1.5} /></button>
    </aside>
  );
}

function HistoryPanel() {
  return (
    <aside className="flex w-[239px] shrink-0 flex-col bg-[#fdfdfd] text-[11px]">
      <h2 className="flex h-[33px] shrink-0 items-center border-b border-[#e6e7ec] bg-white pt-px pl-5 text-[11px] text-black">バージョン履歴</h2>
      <div className="flex h-[51px] shrink-0 items-center justify-between border-b border-[#e6e7ec] bg-white pr-5 pl-[21px] text-[#888]">
        <button className="flex items-center gap-px"><CirclePlus size={19} strokeWidth={2.2} />バージョンを作...</button>
        <div className="relative flex items-center">
          <select disabled aria-label="絞り込み" className="h-6 w-[72px] appearance-none rounded border border-[#e2e2e2] bg-[#efefef] pl-[6px] text-[#aaa]">
            <option>すべて</option>
          </select>
          <Caret className="absolute right-[6px]" />
        </div>
      </div>
      <p className="mt-12 px-4 text-center leading-[17px] text-black">
        バージョン履歴を使用するには、<br />
        <a href="#save" className="text-[#0080ff]">ファイルをクラウドに保存</a>してくださ<br />い 。
      </p>
    </aside>
  );
}

// ---------------------------------------------------------------- status bar

function StatusBar() {
  const [zoom, setZoom] = useState(29);
  return (
    <footer className="flex h-[33px] shrink-0 items-center border-b border-[#d5e6d5] bg-[#f3f5f9] text-xs text-[#333]">
      <button aria-label="ページ一覧" className="flex w-12 justify-center pl-[6px]">
        <svg width="18" height="12" viewBox="0 0 18 12" fill="none" stroke="#333" strokeWidth="1.200"><path d="M.6 1v10M17.400 1v10M4 1.500h10v9H4z" /></svg>
      </button>
      <Sep className="h-[22px]" />
      <div className="relative flex items-center">
        <select aria-label="ページ" className="h-6 w-32 appearance-none pl-4 text-[13px]"><option>Page-1</option></select>
        <Caret className="absolute right-[13px]" />
      </div>
      <Sep className="h-[22px]" />
      <button aria-label="ページを追加" className="flex w-10 justify-center"><Plus size={16} strokeWidth={1.5} /></button>
      <Sep className="h-[22px]" />
      <button className="w-[72px] text-[13px] text-[#0080ff]">Page-1</button>
      <Sep className="h-[22px]" />
      <div className="ml-auto flex items-center">
        <Sep className="h-[22px]" />
        <span className="w-[101px] text-center whitespace-nowrap">図形の個数： 18</span>
        <Sep className="h-[22px]" />
        <button aria-label="レイヤー" className="ml-[10px] flex w-[46px] items-center gap-[3px]"><Layers2 size={20} strokeWidth={1.4} /><Caret /></button>
        <button className="flex w-[98px] items-center gap-2 whitespace-nowrap">
          <svg width="14" height="14" viewBox="0 0 14 14" fill="none" stroke="#333" strokeWidth="1.300"><path d="M4 .7H.7V4M10 .7h3.300V4M4 13.300H.7V10M10 13.300h3.300V10M4.500 4h3.500L9.500 5.500V10h-5z" /></svg>
          全画面モード
        </button>
        <button aria-label="再生" className="w-[30px]"><CirclePlay size={19} strokeWidth={1.4} /></button>
        <Sep className="h-[22px]" />
        <button aria-label="縮小" className="ml-[9px] w-6"><Minus size={15} strokeWidth={1.6} /></button>
        <input
          type="range"
          aria-label="ズーム"
          value={zoom}
          onChange={(e) => setZoom(e.target.value)}
          className="h-[3px] w-[95px] appearance-none rounded bg-linear-to-r from-[#444] from-30% to-white to-30% [&::-webkit-slider-thumb]:h-3 [&::-webkit-slider-thumb]:w-3 [&::-webkit-slider-thumb]:appearance-none [&::-webkit-slider-thumb]:rounded-full [&::-webkit-slider-thumb]:border-2 [&::-webkit-slider-thumb]:border-[#444] [&::-webkit-slider-thumb]:bg-white"
        />
        <button aria-label="拡大" className="ml-[10px] w-[30px]"><Plus size={15} strokeWidth={1.6} /></button>
        <button className="flex w-[54px] items-center gap-2 text-[11px]">120%<Caret /></button>
        <Sep className="h-[22px]" />
        <button aria-label="ページに合わせる" className="ml-[13px] w-8">
          <svg width="14" height="14" viewBox="0 0 14 14" fill="none" stroke="#333" strokeWidth="1.200"><path d="M4.500.6H.6v3.900M9.500.6h3.900v3.900M4.500 13.400H.6V9.500M9.500 13.400h3.900V9.500M4 4.500h6v5H4z" /></svg>
        </button>
        <button aria-label="幅に合わせる" className="mr-[21px]">
          <svg width="14" height="14" viewBox="0 0 14 14" fill="none" stroke="#333" strokeWidth="1.200"><path d="M.6.6h12.800v12.800H.6zM3 7h8M5 5L3 7l2 2M9 5l2 2-2 2" /></svg>
        </button>
      </div>
    </footer>
  );
}

function App() {
  return (
    <div className="flex h-screen flex-col overflow-hidden bg-white font-['Noto_Sans','Noto_Sans_CJK_JP',sans-serif] [font-feature-settings:'palt']">
      <TitleBar />
      <MenuBar />
      <Ribbon />
      <div className="flex min-h-0 flex-1">
        <LeftRail />
        <ShapesPanel />
        <Workspace />
        <RightRail />
        <HistoryPanel />
      </div>
      <StatusBar />
    </div>
  );
}

export default App;
